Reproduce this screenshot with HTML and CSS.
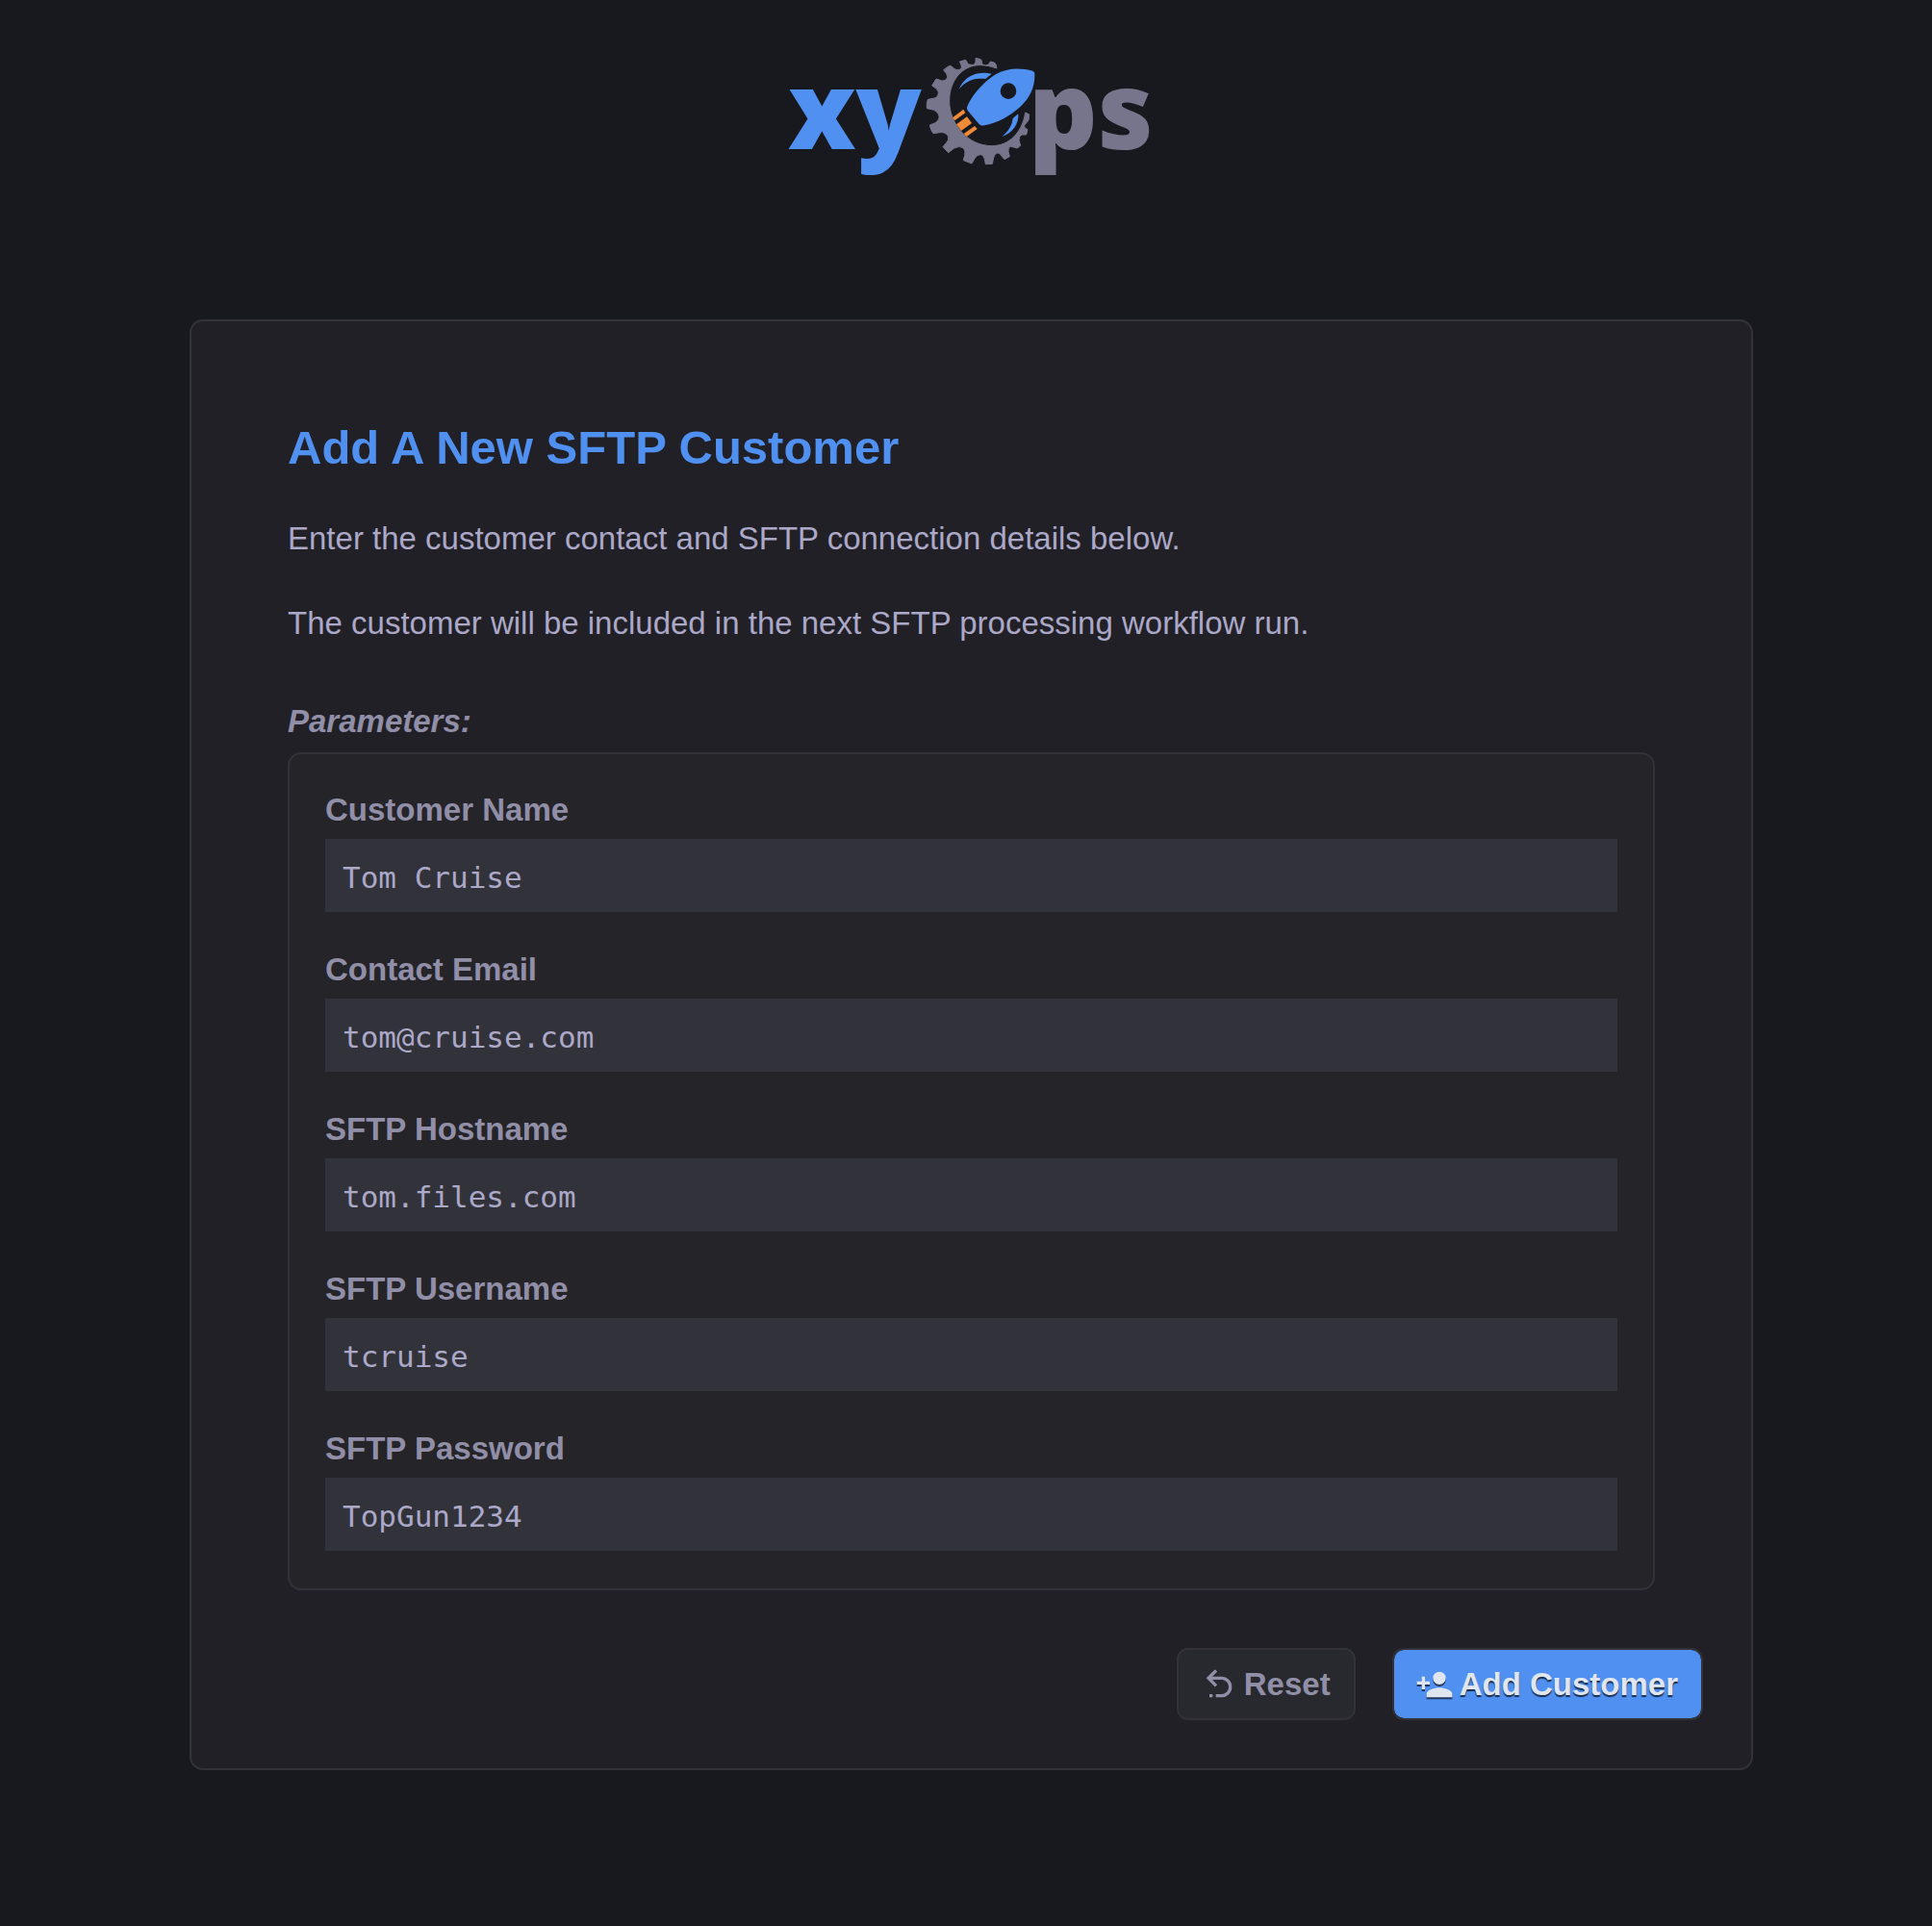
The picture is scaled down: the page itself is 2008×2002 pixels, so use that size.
FILE: index.html
```html
<!DOCTYPE html>
<html lang="en">

<head>
  <meta charset="UTF-8" />
  <meta name="viewport" content="width=device-width, initial-scale=1.0" />
  <title>xyOps - Add A New SFTP Customer</title>
  <link rel="stylesheet" href="styles.css">
</head>

<body>
  <header>
    <svg class="logo" viewBox="61 60 1134 366" role="img" aria-label="xyOps">
      <text class="logo-text logo-xy" x="55" y="346">xy</text>
      <text class="logo-text logo-ps" x="804" y="346">ps</text>
      <g transform="translate(450 30)">
        <!-- gear -->
        <path class="gear" d="M256 63 Q254 47 248 45 L236 42 Q231 54 222 54 Q212 54 210 48 Q210 37 206 35 L190 31 Q192 50 182 52 Q170 53 166 49 L159 37 L140 42 Q150 60 143 66 Q133 71 124 65 Q112 53 108 55 L90 68 Q103 82 102 90 Q98 103 85 102 L67 96 L54 117 Q72 127 74 137 Q74 153 62 156 L41 160 Q36 173 38 188 L60 193 Q78 203 76 218 Q73 230 62 234 L47 240 Q49 255 58 266 L79 263 Q95 261 104 274 Q108 288 98 296 L88 308 L105 326 L122 313 Q138 303 151 311 Q160 320 156 334 L152 350 L178 360 L187 344 Q195 331 206 332 Q216 334 218 346 L221 362 L242 361 L246 342 Q250 327 258 327 Q267 327 271 337 L280 347 L296 338 L292 322 Q290 309 300 307 L321 312 L330 303 L325 288 Q325 275 334 270 L348 270 L352 254 Q339 249 342 241 L355 225 L357 207 L345 201 C336 262 295 305 240 305 C165 305 108 235 108 165 C108 100 150 52 205 53 C225 53 240 58 256 63 Z" />
        <!-- rocket -->
        <path class="rocket" d="M163 185 C175 150 215 105 250 83 C290 60 330 61 368 71 Q373 73 374 78 C376 120 360 155 330 182 C295 214 255 234 218 241 Q206 244 200 236 L166 196 Q162 190 163 185 Z M317 134 A25 25 0 1 0 267 134 A25 25 0 1 0 317 134 Z" />
        <path class="rocket" d="M138 128 C155 90 190 70 240 80 L221 96 C185 92 160 102 138 128 Z" />
        <path class="rocket" d="M272 276 C308 264 325 235 323 205 L306 219 C304 240 292 260 272 276 Z" />
        <!-- flames -->
        <path class="flame" d="M118 217 L152 191 L158 202 L125 226 Z M130 238 L163 214 L178 234 L145 258 Z M153 267 L187 243 L195 252 L162 276 Z" />
      </g>
    </svg>
  </header>

  <main>
    <form class="panel">
      <div class="panel-body">
        <h1>Add A New SFTP Customer</h1>
        <p>Enter the customer contact and SFTP connection details below.</p>
        <p>The customer will be included in the next SFTP processing workflow run.</p>

        <h2 id="params-title">Parameters:</h2>
        <div class="params" role="group" aria-labelledby="params-title">
          <div class="field">
            <label for="name">Customer Name</label>
            <input type="text" id="name" value="Tom Cruise">
          </div>
          <div class="field">
            <label for="email">Contact Email</label>
            <input type="email" id="email" value="tom@cruise.com">
          </div>
          <div class="field">
            <label for="host">SFTP Hostname</label>
            <input type="text" id="host" value="tom.files.com">
          </div>
          <div class="field">
            <label for="user">SFTP Username</label>
            <input type="text" id="user" value="tcruise">
          </div>
          <div class="field">
            <label for="pass">SFTP Password</label>
            <input type="text" id="pass" value="TopGun1234">
          </div>
        </div>
      </div>

      <div class="buttons">
        <button type="reset" class="button">
          <svg class="icon" viewBox="0 0 24 24" aria-hidden="true"><path d="M13.5,7A6.5,6.5 0 0,1 20,13.5A6.5,6.5 0 0,1 13.5,20H10V18H13.5C16,18 18,16 18,13.5C18,11 16,9 13.5,9H7.83L10.91,12.09L9.5,13.5L4,8L9.5,2.5L10.92,3.91L7.83,7H13.5M6,18H8V20H6V18Z" /></svg>
          <span>Reset</span>
        </button>
        <button type="submit" class="button primary">
          <svg class="icon" viewBox="0 0 24 24" aria-hidden="true"><path d="M15,14C12.33,14 7,15.33 7,18V20H23V18C23,15.33 17.67,14 15,14M6,10V7H4V10H1V12H4V15H6V12H9V10M15,12A4,4 0 0,0 19,8A4,4 0 0,0 15,4A4,4 0 0,0 11,8A4,4 0 0,0 15,12Z" /></svg>
          <span>Add Customer</span>
        </button>
      </div>
    </form>
  </main>
</body>

</html>
```

FILE: styles.css
```css
* {
  margin: 0;
  padding: 0;
  box-sizing: border-box;
}

body {
  font-family: "Liberation Sans", Arial, sans-serif;
  font-size: 33px;
  line-height: 44px;
  background: #18191e;
  color: #aba8c8;
  min-height: 100vh;
  padding: 60px 186px 60px 197px;
}

header {
  display: flex;
  justify-content: center;
  margin-bottom: 150px;
}

.logo {
  width: 378px;
  height: 122px;
  overflow: visible;
}

.logo-text {
  font-family: "Open Sans", sans-serif;
  font-weight: 800;
  font-size: 336px;
}

.logo-xy {
  fill: #5090f0;
}

.logo-ps {
  fill: #77758b;
}

.gear {
  fill: #77758b;
  stroke: #77758b;
  stroke-width: 3;
  stroke-linejoin: round;
}

.rocket {
  fill: #5090f0;
}

.flame {
  fill: #f08a38;
}

.panel {
  background: #212026;
  border: 2px solid #323238;
  border-radius: 14px;
}

.panel-body {
  padding: 101px 100px 0;
}

h1 {
  font-size: 49px;
  line-height: 60px;
  color: #5090f0;
  margin-bottom: 43px;
}

p {
  margin-bottom: 44px;
}

h2 {
  font-size: 33px;
  line-height: 44px;
  font-style: italic;
  color: #918fa8;
  margin-top: 58px;
  margin-bottom: 10px;
}

.params {
  display: flex;
  flex-direction: column;
  gap: 38px;
  padding: 36px 37px 39px;
  background: #252429;
  border: 2px solid #323238;
  border-radius: 14px;
}

.field label {
  display: block;
  font-weight: bold;
  color: #918fa8;
  margin-bottom: 8px;
}

.field input {
  display: block;
  width: 100%;
  height: 76px;
  padding: 4px 18px 0;
  border: none;
  background: #32323a;
  color: #aba8c8;
  font-family: "DejaVu Sans Mono", monospace;
  font-size: 31px;
}

.field input:focus {
  outline: 2px solid #5090f0;
}

.buttons {
  display: flex;
  justify-content: flex-end;
  gap: 38px;
  padding: 60px 50px 50px;
}

.button {
  display: flex;
  align-items: center;
  gap: 6px;
  height: 75px;
  padding: 0 24px 0 22px;
  font-family: inherit;
  font-size: 33px;
  font-weight: bold;
  color: #918fa8;
  background: #28292e;
  border: 2px solid #323238;
  border-radius: 12px;
  cursor: pointer;
}

.button:hover {
  border-color: #5090f0;
}

.primary {
  color: #e0e6f0;
  background: #5090f0;
  background-clip: padding-box;
  text-shadow: 0 2px 1px rgba(0, 0, 0, 0.7);
}

.icon {
  width: 40px;
  height: 40px;
  fill: currentColor;
}

.primary .icon {
  filter: drop-shadow(0 2px 0 rgba(0, 0, 0, 0.6));
}
```
